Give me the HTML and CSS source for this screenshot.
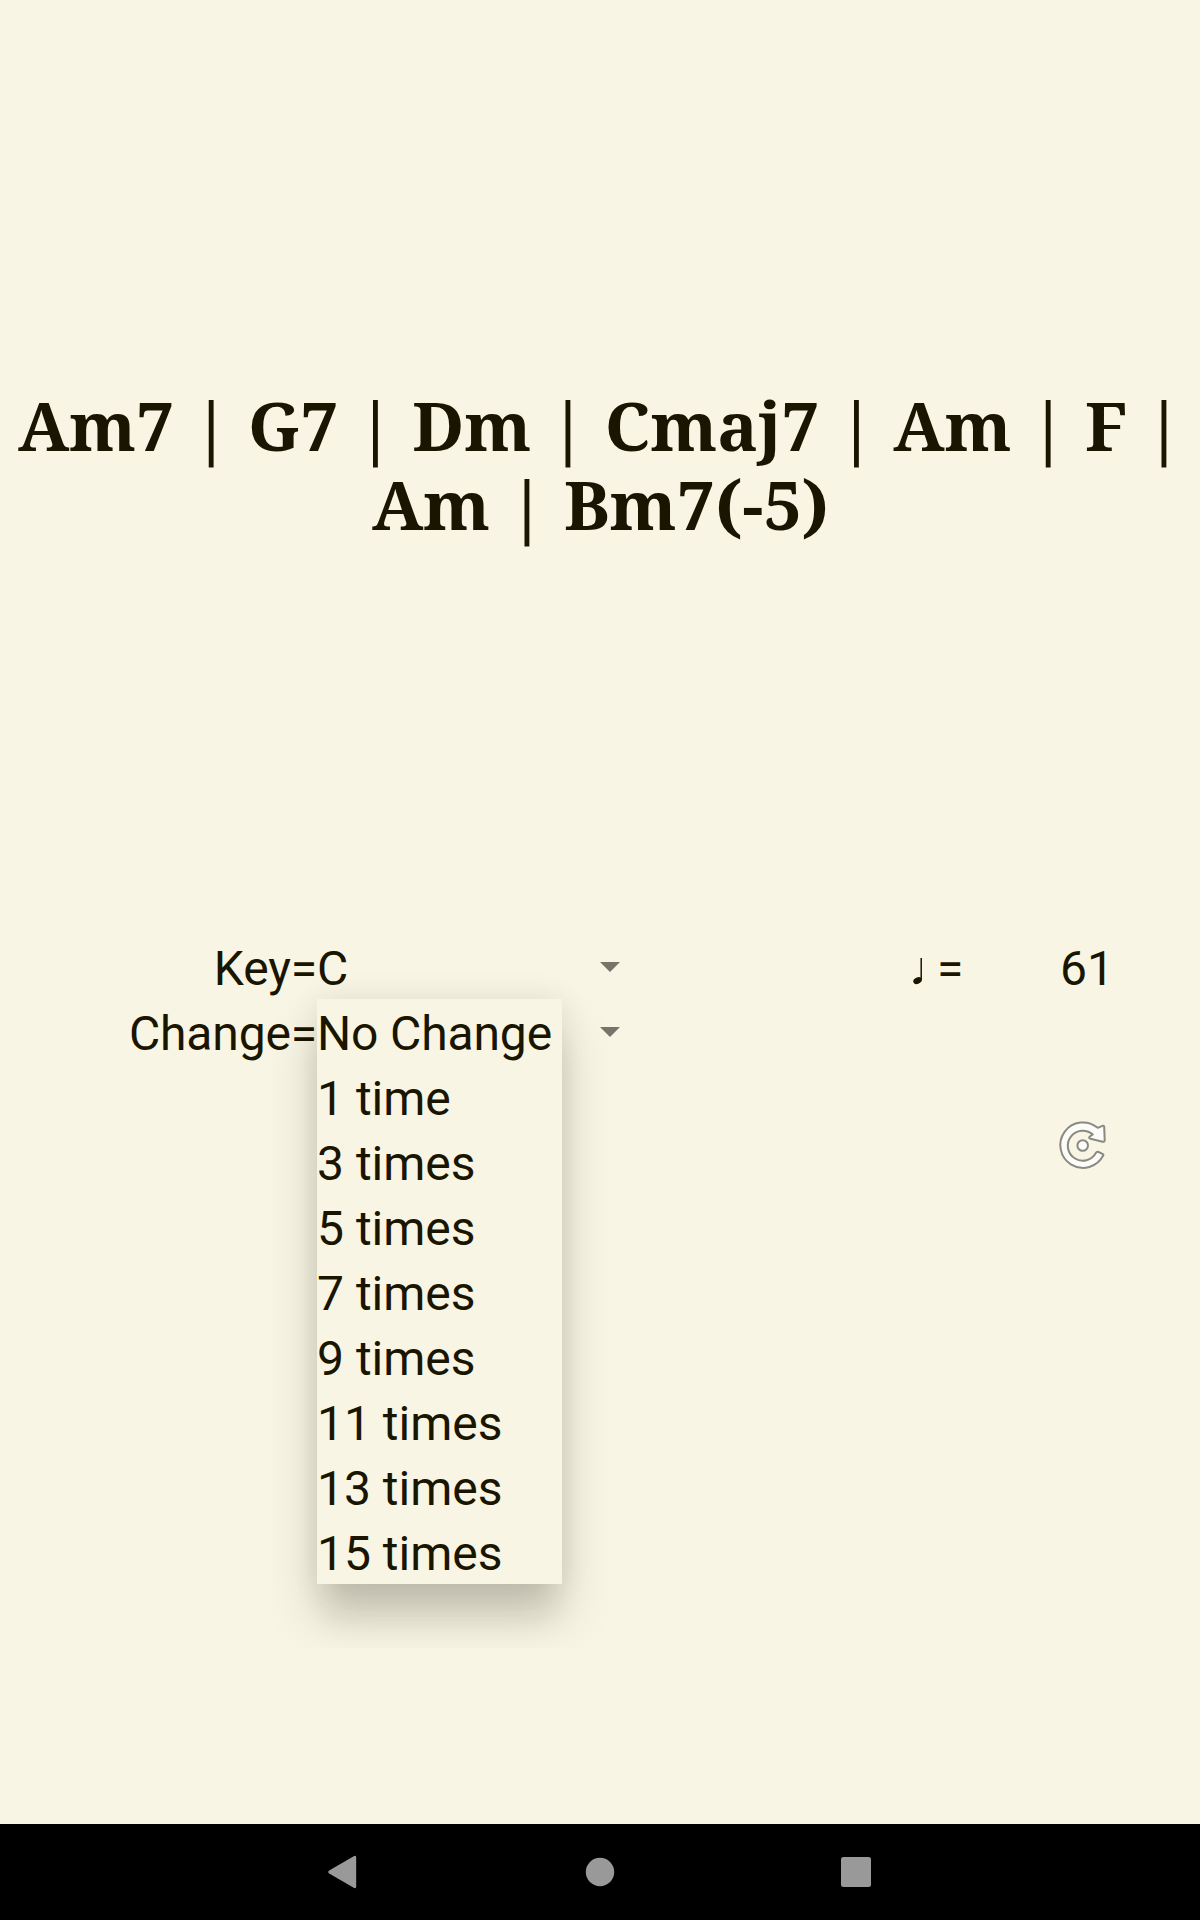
FILE: index.html
```html
<!DOCTYPE html>
<html lang="en">
<head>
<meta charset="utf-8">
<title>Chord progression</title>
<link rel="stylesheet" href="styles.css">
</head>
<body>
<main class="app">
  <h1 class="chords"><span class="wide">Am7 | G7 | Dm | Cmaj7 | Am | F |</span><span>Am | Bm7(-5)</span></h1>
  <section class="controls">
    <div class="row">
      <span class="label">Key=</span>
      <div class="spinner"><span>C</span><i class="caret"></i></div>
      <div class="tempo"><svg class="note" viewBox="0 0 10 28"><path d="M8.2 1V22" stroke="#1a1500" stroke-width="1.5"/><ellipse cx="4.6" cy="23.6" rx="4.5" ry="3.2" transform="rotate(-25 4.6 23.6)" fill="#1a1500"/></svg><span>=</span></div>
      <span class="bpm">61</span>
    </div>
    <div class="row">
      <span class="label">Change=</span>
      <div class="spinner"><i class="caret"></i>
        <div class="shade"></div>
        <ul class="menu">
          <li class="current">No Change</li><li>1 time</li><li>3 times</li><li>5 times</li><li>7 times</li><li>9 times</li><li>11 times</li><li>13 times</li><li>15 times</li>
        </ul>
      </div>
    </div>
    <svg class="refresh" viewBox="-.5 -.5 90 90" fill="#fcfcf8" stroke="#8a8a82" stroke-width="2" stroke-linejoin="round"><path d="M62.8 54.8A22.7 22.7 0 1 1 57.2 27.3L62 25.3Q63.5 24.8 63.7 26.3L64.2 39.5Q64.2 41.6 62.2 41.2L50 38.3Q47.6 37.4 49.3 36L52.3 34A15 15 0 1 0 55.5 52.3Q56.4 50.7 58 51.5L62 53.4Q63.3 54 62.8 54.8Z"/><circle cx="42.2" cy="45" r="5.3"/></svg>
  </section>
</main>
<nav class="navbar">
  <svg viewBox="0 0 32 36"><path d="M1.2 16.5L25.7 2.2Q28.2 1 28.2 3.5V32.5Q28.2 35 25.7 33.8L1.2 19.5Q-.8 18 1.2 16.5Z"/></svg>
  <svg viewBox="0 0 32 36"><circle cx="16" cy="18" r="14.2"/></svg>
  <svg viewBox="0 0 32 36"><rect x="1" y="3" width="30" height="30" rx="2.5"/></svg>
</nav>
</body>
</html>
```
FILE: styles.css
```css
* { box-sizing: border-box; }
body {
  margin: 0;
  height: 1920px;
  display: flex;
  flex-direction: column;
  background: #f8f5e4;
  color: #1a1500;
  font-family: Roboto, "Liberation Sans", sans-serif;
  font-size: 48px;
  overflow: hidden;
}
.app { flex: 1; padding-top: 385px; }
.chords {
  margin: 0;
  display: flex;
  flex-direction: column;
  align-items: center;
  height: 549px;
  padding-left: 1px;
  font: bold 68px/79px "Noto Serif", "Droid Serif", "DejaVu Serif Condensed", "DejaVu Serif", serif;
  white-space: nowrap;
}
.wide { letter-spacing: -.07px; }
.row {
  display: grid;
  grid-template-columns: 317px 317px 276px 150px 140px;
  height: 65px;
  line-height: 70px;
}
.label { text-align: right; letter-spacing: -.14px; }
.spinner {
  position: relative;
  display: flex;
  justify-content: space-between;
}
.caret {
  width: 20px;
  height: 10px;
  margin: 28px 14px 0 auto;
  background: #77746a;
  clip-path: polygon(0 0, 100% 0, 50% 100%);
}
.tempo { grid-column: 4; display: flex; gap: 14px; }
.note { width: 10px; height: 28px; margin: 23px 0 0 3px; }
.menu {
  position: absolute;
  top: 0;
  left: 0;
  width: 245px;
  margin: 0;
  padding: 0;
  list-style: none;
  background: #f8f5e4;
}
.menu li { height: 65px; white-space: nowrap; }
.menu .current { letter-spacing: -.14px; }
.shade {
  position: absolute;
  top: 0;
  left: 0;
  width: 245px;
  height: 585px;
  box-shadow: 0 38px 28px -8px rgba(20, 20, 10, .11), 0 32px 50px 4px rgba(20, 20, 10, .12), 0 0 30px rgba(20, 20, 10, .08);
  clip-path: inset(-30px -46px -64px -46px);
}
.refresh { display: block; width: 90px; height: 90px; margin: 36px 0 0 1040px; }
.navbar {
  height: 96px;
  display: flex;
  justify-content: center;
  align-items: center;
  gap: 224px;
  background: #000;
}
.navbar svg { width: 32px; height: 36px; fill: #999; }
```
